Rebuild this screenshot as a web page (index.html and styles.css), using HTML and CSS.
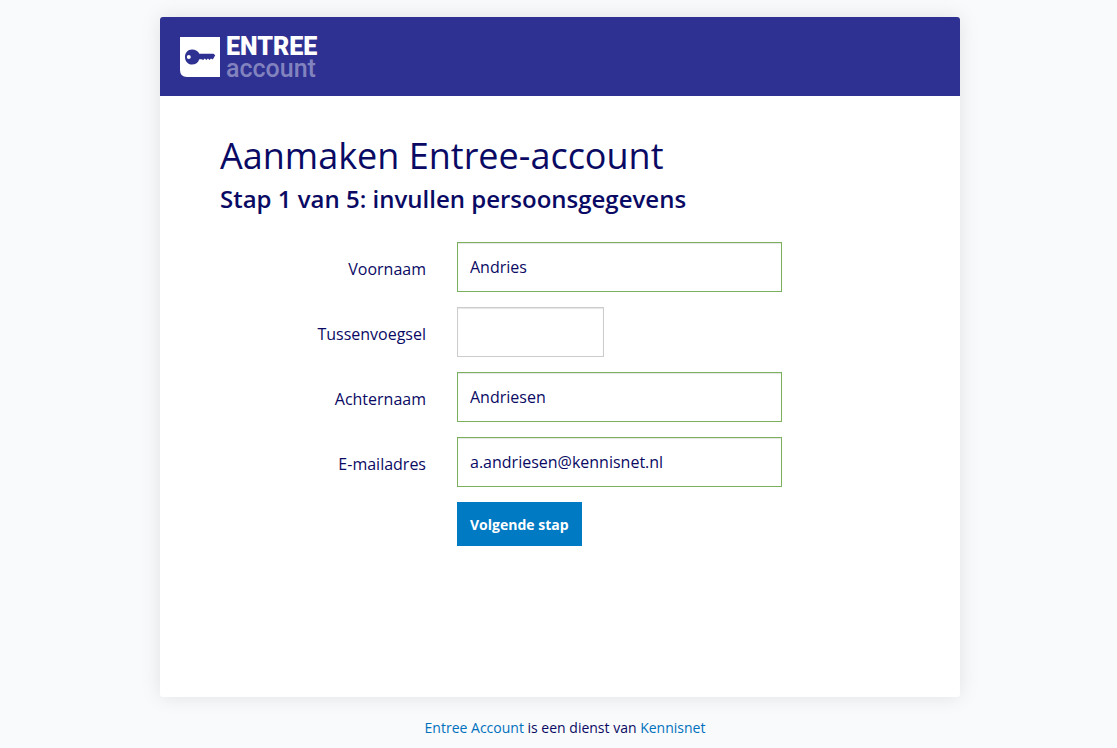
FILE: index.html
```
<!DOCTYPE html>
<html lang="nl">
<head>
    <meta charset="UTF-8">
    <meta name="viewport" content="width=device-width, initial-scale=1.0">
    <title>Aanmaken Entree-account</title>
    <link rel="stylesheet" href="styles.css">
</head>
<body>
    <div class="container">
        <header class="header">
            <svg class="logo-icon" viewBox="0 0 40 40" aria-hidden="true">
                <path fill="#fff" d="M0 0H40V40H7Q0 40 0 33Z"/>
                <path fill="#2e3192" fill-rule="evenodd" d="M12 12.500C15.500 12.500 18.300 14.300 19.300 16.700H33.500L35.200 18.300 33.600 21.300 32.400 22.600 31 21.500 29.500 23 28 21.500 26.300 23 24.800 21.500 23.200 23 21.600 22.300H19.300C18.300 25.600 15.500 27.600 12 27.600 7.800 27.600 5 24.200 5 20S7.800 12.500 12 12.500ZM8.800 18A2 2 0 1 0 8.800 22 2 2 0 1 0 8.800 18Z"/>
            </svg>
            <div class="logo-text">
                <span class="logo-entree">ENTREE</span>
                <span class="logo-account">account</span>
            </div>
        </header>
        <main class="content">
            <h1>Aanmaken Entree-account</h1>
            <h2>Stap 1 van 5: invullen persoonsgegevens</h2>
            <form class="form">
                <div class="row">
                    <label for="voornaam">Voornaam</label>
                    <input type="text" id="voornaam" class="valid" value="Andries">
                </div>
                <div class="row">
                    <label for="tussenvoegsel">Tussenvoegsel</label>
                    <input type="text" id="tussenvoegsel" class="short">
                </div>
                <div class="row">
                    <label for="achternaam">Achternaam</label>
                    <input type="text" id="achternaam" class="valid" value="Andriesen">
                </div>
                <div class="row">
                    <label for="email">E-mailadres</label>
                    <input type="email" id="email" class="valid" value="a.andriesen@kennisnet.nl">
                </div>
                <div class="row">
                    <button type="button">Volgende stap</button>
                </div>
            </form>
        </main>
    </div>
    <footer class="footer">
        <a href="#">Entree Account</a> is een dienst van <a href="#">Kennisnet</a>
    </footer>
</body>
</html>
```
FILE: styles.css
```
*{
    box-sizing: border-box;
}
body{
    margin: 0;
    padding: 17px 0 0 3px;
    background-color: #f9fafc;
    color: #0a0a64;
    font-family: "Open Sans", sans-serif;
    font-size: 16px;
}
.container{
    max-width: 800px;
    min-height: 680px;
    margin: 0 auto;
    background-color: #ffffff;
    border-radius: 3px;
    box-shadow: 0 0 20px rgba(0, 0, 0, 0.1);
    overflow: hidden;
}
.header{
    display: flex;
    align-items: center;
    height: 79px;
    padding: 0 20px;
    background-color: #2e3192;
}
.logo-icon{
    width: 40px;
    height: 40px;
}
.logo-text{
    display: flex;
    flex-direction: column;
    margin-left: 6px;
    padding-top: 2px;
    font-family: Roboto, sans-serif;
    font-size: 25px;
    line-height: 22px;
}
.logo-entree{
    color: #ffffff;
    font-weight: 900;
}
.logo-account{
    color: #8283be;
    font-weight: 500;
}
.content{
    padding: 35px 60px 60px;
}
h1{
    margin: 0;
    font-size: 36px;
    font-weight: 400;
    line-height: 50px;
}
h2{
    margin: 0 0 26px;
    font-size: 24px;
    font-weight: 600;
    line-height: 35px;
}
.row{
    display: grid;
    grid-template-columns: 206px 325px;
    column-gap: 31px;
    margin-bottom: 15px;
}
.row label{
    padding-top: 4px;
    line-height: 46px;
    text-align: right;
}
.row input{
    width: 100%;
    height: 50px;
    padding: 0 12px;
    border: 1px solid #cccccc;
    background-color: #ffffff;
    box-shadow: inset 0 1px 1px rgba(0, 0, 0, 0.1);
    color: #0a0a64;
    font-family: inherit;
    font-size: 16px;
    outline: none;
}
.row input.valid{
    border-color: #7bb05f;
}
.row input.short{
    width: 147px;
}
.row button{
    grid-column: 2;
    justify-self: start;
    height: 44px;
    padding: 0 13px;
    border: none;
    background-color: #007ac3;
    color: #ffffff;
    font-family: inherit;
    font-size: 14px;
    font-weight: 700;
    cursor: pointer;
}
.footer{
    padding: 20px 0 9px 10px;
    font-size: 14px;
    line-height: 22px;
    text-align: center;
}
.footer a{
    color: #0071bc;
    text-decoration: none;
}
@media (max-width: 700px){
    .content{
        padding: 36px 20px;
    }
    .row{
        grid-template-columns: 1fr;
    }
    .row label{
        text-align: left;
    }
    .row button{
        grid-column: 1;
    }
}
```
